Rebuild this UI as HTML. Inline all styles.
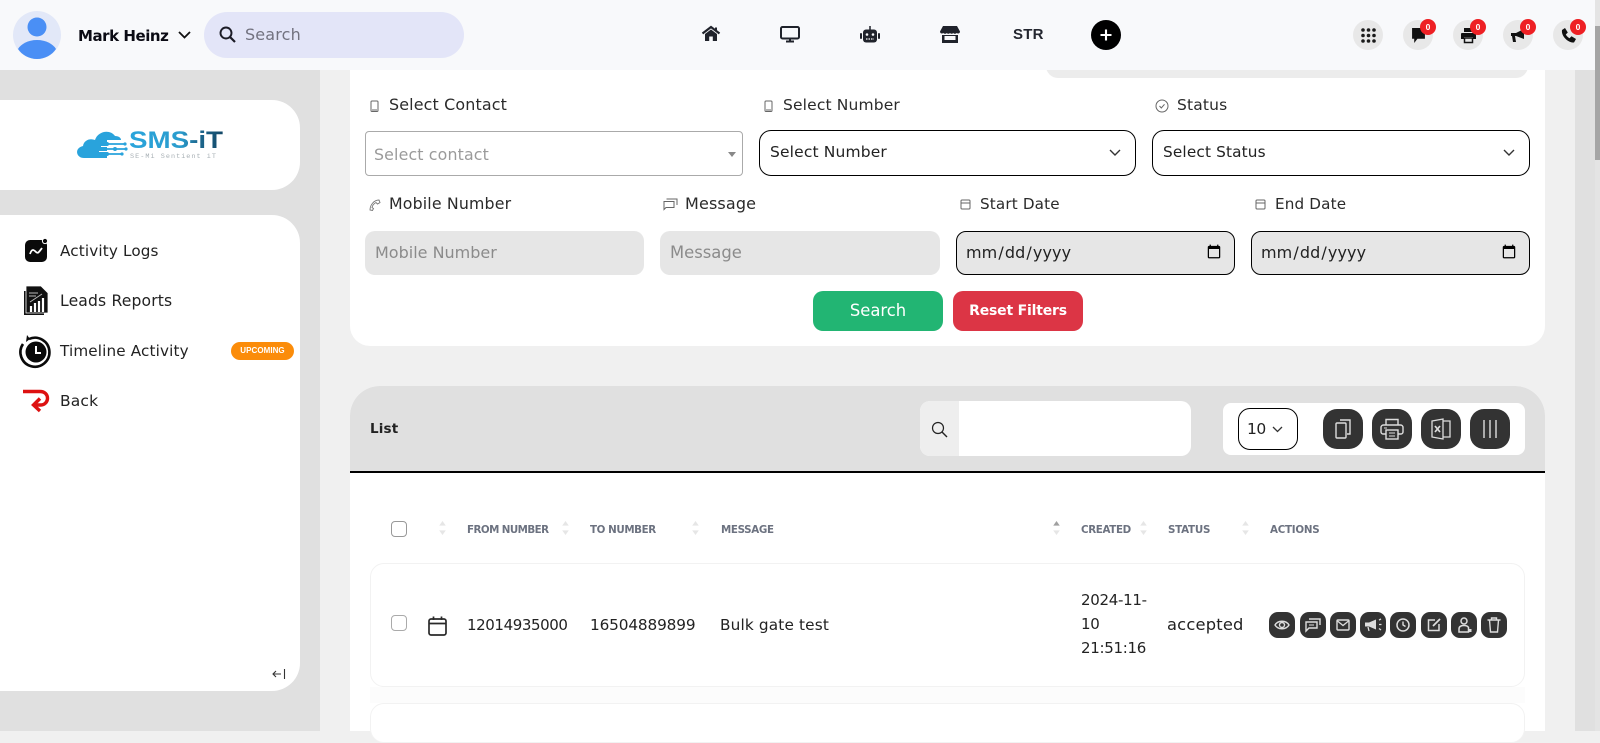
<!DOCTYPE html>
<html lang="en"><head><meta charset="utf-8"><title>SMS-iT</title>
<style>
*{box-sizing:border-box}
html,body{margin:0;padding:0;width:1600px;height:731px;overflow:hidden;background:#f0f0f0;font-family:"DejaVu Sans","Liberation Sans",sans-serif;color:#222}
.a{position:absolute}
.t{position:absolute;white-space:nowrap;line-height:20px;height:20px;font-size:15.4px;letter-spacing:.15px}
svg{position:absolute;display:block;overflow:visible}
.lab{color:#2a2a2a;font-size:15.5px}
.sel{position:absolute;background:#fff;border:1px solid #000;border-radius:12px;height:46px;top:130px;width:378px}
.inp{position:absolute;top:231px;height:44px;width:279px;border:0;border-radius:10px;background:#e6e6e6;padding:0 10px 2px;font:16px "DejaVu Sans",sans-serif;color:#222;outline:0}
.inp::placeholder{color:#8b8b8b;opacity:1}
.date{border:1px solid #000;letter-spacing:.1px;padding:0 10px 2px 8px}
.nb{position:absolute;top:20px;width:30px;height:30px;border-radius:50%;background:#e8e8e8}
.bd{position:absolute;width:16px;height:16px;border-radius:50%;background:#ee2024;top:19px;color:#fff;font:bold 8.5px/16px "Liberation Sans",sans-serif;text-align:center}
.tb{position:absolute;top:409px;width:40px;height:40px;border-radius:14px;background:#333}
.ab{position:absolute;top:612px;width:26px;height:26px;border-radius:9px;background:#333}
.th{position:absolute;top:520px;height:20px;line-height:20px;font-size:10.3px;font-weight:bold;color:#6c7280;white-space:nowrap;letter-spacing:-.25px}
</style></head><body>

<!-- sidebar + page bg -->
<div class="a" style="left:0;top:70px;width:320px;height:661px;background:#e0e0e0"></div>
<div class="a" style="left:1575px;top:70px;width:20px;height:661px;background:#e0e0e0"></div>
<div class="a" style="left:0;top:100px;width:300px;height:90px;background:#fff;border-radius:0 28px 28px 0"></div>
<div class="a" style="left:0;top:215px;width:300px;height:476px;background:#fff;border-radius:0 28px 28px 0"></div>

<!-- logo -->
<svg style="left:77px;top:128px" width="147" height="34" viewBox="0 0 147 34">
<defs><linearGradient id="g" x1="0" x2="1"><stop offset="0" stop-color="#2aa5dc"/><stop offset=".55" stop-color="#2a9ccd"/><stop offset=".72" stop-color="#1d6a92"/><stop offset="1" stop-color="#134766"/></linearGradient></defs>
<path d="M7 30C-1 30-3 20 6 18 7 12 13 10 18 12 21 3 33 1 38 8 42 8 44 10 44 12H30V30Z" fill="#29a3dc"/>
<path d="M24 16H48M26 21H50M22 26H46" stroke="#29a3dc" stroke-width="1.800" fill="none"/>
<path d="M24 18.500H40M22 23.500H37" stroke="#fff" stroke-width="1" fill="none"/>
<circle cx="30" cy="16" r="2" fill="#29a3dc"/><circle cx="38" cy="21" r="2" fill="#29a3dc"/><circle cx="30" cy="26" r="2" fill="#29a3dc"/><circle cx="48" cy="16" r="1.600" fill="#29a3dc"/><circle cx="49" cy="21" r="1.600" fill="#29a3dc"/><circle cx="45" cy="26" r="1.600" fill="#29a3dc"/>
<text x="52" y="20" font-family="Liberation Sans,sans-serif" font-weight="bold" font-size="24" fill="url(#g)" textLength="94" lengthAdjust="spacingAndGlyphs">SMS-iT</text>
<text x="53" y="30" font-family="Liberation Mono,monospace" font-size="6.800" fill="#a8b0b5" textLength="86" lengthAdjust="spacing">SE-Mi Sentient iT</text>
</svg>

<!-- sidebar menu -->
<svg style="left:24px;top:238px" width="25" height="25" viewBox="0 0 25 25"><rect x="1" y="2" width="22" height="22" rx="5" fill="#0a0a0a"/><circle cx="21" cy="3" r="2.600" fill="#0a0a0a" stroke="#fff" stroke-width="1"/><path d="M6 16C8 10 10 12 12 14S15 14 18 10" stroke="#fff" stroke-width="1.800" fill="none"/></svg>
<div class="t" style="left:60px;top:241px;font-size:15.2px">Activity Logs</div>
<svg style="left:23px;top:286px" width="27" height="30" viewBox="0 0 27 30"><rect x="1" y="5" width="20" height="24" fill="#111"/><path d="M3 0H18L25 7V27H3Z" fill="#111" stroke="#fff" stroke-width=".8"/><path d="M6 7H15M6 10H13M7 16L19 8" stroke="#bbb" stroke-width="1"/><path d="M8 26V20M12 26V17M16 26V15M20 26V12" stroke="#fff" stroke-width="2.200"/></svg>
<div class="t" style="left:60px;top:291px;font-size:15.600px">Leads Reports</div>
<svg style="left:20px;top:335px" width="32" height="32" viewBox="0 0 32 32"><circle cx="16" cy="17" r="10.500" fill="#0a0a0a"/><path d="M3 9A14.500 14.500 0 1 0 9 4" stroke="#0a0a0a" stroke-width="2.600" fill="none"/><path d="M7 0L10 4 6 7Z" fill="#0a0a0a"/><path d="M16 11V18H21" stroke="#fff" stroke-width="2" fill="none"/></svg>
<div class="t" style="left:60px;top:341px;font-size:15.200px">Timeline Activity</div>
<div class="a" style="left:231px;top:342px;width:63px;height:18px;border-radius:9px;background:#fb8c0a;color:#fff;font:bold 8px/18px 'Liberation Sans',sans-serif;text-align:center;letter-spacing:.05px">UPCOMING</div>
<svg style="left:22px;top:389px" width="29" height="24" viewBox="0 0 29 24"><path d="M1 2.500H18C28 2.500 28 16 18 16H13" stroke="#dd1111" stroke-width="3.400" fill="none"/><path d="M18 9.500L11.500 16 18 22" stroke="#dd1111" stroke-width="3.400" fill="none"/></svg>
<div class="t" style="left:60px;top:391px;font-size:15.500px">Back</div>
<svg style="left:272px;top:668px" width="14" height="12" viewBox="0 0 14 12"><path d="M9 6H1M4 3L1 6 4 9M12.500 1V11" stroke="#333" stroke-width="1.100" fill="none"/></svg>

<!-- rounded element behind header -->
<div class="a" style="left:350px;top:70px;width:1195px;height:276px;background:#fff;border-radius:0 0 20px 20px"></div>
<div class="a" style="left:1046px;top:66px;width:482px;height:12px;background:#ececec;border-radius:0 0 14px 14px"></div>

<!-- header -->
<div class="a" style="left:0;top:0;width:1595px;height:70px;background:#f8f9fb"></div>
<svg style="left:13px;top:11px" width="48" height="48" viewBox="0 0 48 48"><circle cx="24" cy="24" r="24" fill="#e2e8f8"/><circle cx="24" cy="16" r="9.500" fill="#4a8ff5"/><path d="M5 38C8 33 15 29 24 29S40 33 43 38C39 44 32 48 24 48S9 44 5 38Z" fill="#4a8ff5"/></svg>
<div class="t" style="left:78px;top:26px;font-weight:bold;font-size:15px;color:#0b0b14;letter-spacing:-.45px">Mark Heinz</div>
<svg style="left:178px;top:31px" width="13" height="8" viewBox="0 0 13 8"><path d="M1 1L6.500 6.500 12 1" stroke="#111" stroke-width="1.800" fill="none"/></svg>
<div class="a" style="left:204px;top:12px;width:260px;height:46px;border-radius:23px;background:#e3e5f8"></div>
<svg style="left:219px;top:26px" width="17" height="17" viewBox="0 0 17 17"><circle cx="7" cy="7" r="5.500" stroke="#1b1b26" stroke-width="1.900" fill="none"/><path d="M11 11L16 16" stroke="#1b1b26" stroke-width="2.200"/></svg>
<div class="t" style="left:245px;top:25px;font-size:16px;color:#72727f">Search</div>

<svg style="left:702px;top:26px" width="18" height="15" viewBox="0 0 18 15"><path d="M0.500 7.500L9 1 17.500 7.500" stroke="#20232b" stroke-width="2.200" fill="none"/><path d="M3 8L9 3.500 15 8V15H10.800V10.500H7.200V15H3Z" fill="#20232b"/><path d="M13 1.500H15V5H13Z" fill="#20232b"/></svg>
<svg style="left:780px;top:26px" width="20" height="17" viewBox="0 0 20 17"><rect x="1" y="1" width="18" height="11.500" rx="1.500" stroke="#20232b" stroke-width="2" fill="none"/><path d="M6 15.500H14M10 13V15" stroke="#20232b" stroke-width="2"/></svg>
<svg style="left:860px;top:26px" width="20" height="17" viewBox="0 0 20 17"><rect x="3" y="3.500" width="14" height="13" rx="3" fill="#20232b"/><path d="M10 0V4" stroke="#20232b" stroke-width="1.500"/><rect x="0" y="7" width="2" height="6" rx="1" fill="#20232b"/><rect x="18" y="7" width="2" height="6" rx="1" fill="#20232b"/><circle cx="7" cy="8.500" r="1.300" fill="#f8f9fb"/><circle cx="13" cy="8.500" r="1.300" fill="#f8f9fb"/><path d="M6 13H14" stroke="#f8f9fb" stroke-width="1.200" stroke-dasharray="1.500 1"/></svg>
<svg style="left:940px;top:26px" width="20" height="17" viewBox="0 0 20 17"><path d="M3 0H17L20 5.500C20 7.500 18 8 16.700 7 15.500 8 14 8 13.300 7 12 8 11 8 10 7 9 8 8 8 6.700 7 6 8 4.500 8 3.300 7 2 8 0 7.500 0 5.500Z" fill="#20232b"/><path d="M2 9H18V17H2Z" fill="#20232b"/><rect x="4.500" y="10" width="11" height="4" fill="#f8f9fb"/></svg>
<div class="t" style="left:1013px;top:25px;font:bold 15px/20px 'Liberation Sans',sans-serif;color:#23262f;letter-spacing:.2px">STR</div>
<div class="a" style="left:1091px;top:20px;width:30px;height:30px;border-radius:50%;background:#000"></div>
<svg style="left:1100px;top:29px" width="12" height="12" viewBox="0 0 12 12"><path d="M6 0.500V11.500M0.500 6H11.500" stroke="#fff" stroke-width="2.100"/></svg>

<div class="nb" style="left:1353px"></div>
<svg style="left:1361px;top:28px" width="15" height="15" viewBox="0 0 15 15" fill="#1a1a1a"><circle cx="2" cy="2" r="1.800"/><circle cx="7.500" cy="2" r="1.800"/><circle cx="13" cy="2" r="1.800"/><circle cx="2" cy="7.500" r="1.800"/><circle cx="7.500" cy="7.500" r="1.800"/><circle cx="13" cy="7.500" r="1.800"/><circle cx="2" cy="13" r="1.800"/><circle cx="7.500" cy="13" r="1.800"/><circle cx="13" cy="13" r="1.800"/></svg>
<div class="nb" style="left:1403px"></div>
<svg style="left:1411px;top:28px" width="15" height="15" viewBox="0 0 14 14"><path d="M1 0H13V10H6L3 14V10H1Z" fill="#111"/></svg>
<div class="bd" style="left:1420px">0</div>
<div class="nb" style="left:1453px"></div>
<svg style="left:1461px;top:28px" width="15" height="15" viewBox="0 0 15 15"><path d="M3 0H12V4H3Z" fill="#111"/><path d="M1 5H14C14.600 5 15 5.400 15 6V11H12V9H3V11H0V6C0 5.400 .4 5 1 5Z" fill="#111"/><rect x="3.500" y="10" width="8" height="4.500" fill="none" stroke="#111" stroke-width="1.500"/></svg>
<div class="bd" style="left:1470px">0</div>
<div class="nb" style="left:1503px"></div>
<svg style="left:1511px;top:29px" width="15" height="14" viewBox="0 0 15 14"><path d="M0 4H5L13 0V10L5 7H4L5 13H2L1 7H0Z" fill="#111"/></svg>
<div class="bd" style="left:1520px">0</div>
<div class="nb" style="left:1553px"></div>
<svg style="left:1561px;top:28px" width="15" height="15" viewBox="0 0 15 15"><path d="M1 2L4 0 6.800 4.500 4.800 6.500C5.600 8 7 9.400 8.500 10.200L10.500 8.200 15 11 13 14.500C7 15 0 8 1 2Z" fill="#111"/></svg>
<div class="bd" style="left:1570px">0</div>

<!-- scrollbar -->
<div class="a" style="left:1595px;top:0;width:5px;height:731px;background:#e4e4e4"></div>
<div class="a" style="left:1595px;top:26px;width:5px;height:134px;background:#a5a5a5"></div>

<!-- form row 1 -->
<svg style="left:370px;top:100px" width="9" height="12" viewBox="0 0 9 12"><rect x="1" y="1" width="7" height="10.500" rx="1" stroke="#666" stroke-width="1" fill="none"/><path d="M2 10H7" stroke="#666"/></svg>
<div class="t lab" style="left:389px;top:95px;font-size:15.900px">Select Contact</div>
<svg style="left:764px;top:100px" width="9" height="12" viewBox="0 0 9 12"><rect x="1" y="1" width="7" height="10.500" rx="1" stroke="#666" stroke-width="1" fill="none"/><path d="M2 10H7" stroke="#666"/></svg>
<div class="t lab" style="left:783px;top:95px">Select Number</div>
<svg style="left:1155px;top:99px" width="14" height="14" viewBox="0 0 14 14"><circle cx="7" cy="7" r="6" stroke="#666" fill="none"/><path d="M4.500 7L6.300 9 9.500 5.300" stroke="#666" fill="none"/></svg>
<div class="t lab" style="left:1177px;top:95px">Status</div>

<div class="a" style="left:365px;top:131px;width:378px;height:45px;border:1px solid #aaa;border-radius:4px;background:#fff"></div>
<div class="t" style="left:374px;top:145px;color:#9a9a9a;font-size:15.800px">Select contact</div>
<svg style="left:728px;top:152px" width="8" height="5" viewBox="0 0 8 5"><path d="M0 0H8L4 5Z" fill="#888"/></svg>

<div class="sel" style="left:759px;width:377px"></div>
<div class="t" style="left:770px;top:142px;font-size:15.500px">Select Number</div>
<svg style="left:1109px;top:149px" width="12" height="7" viewBox="0 0 12 7"><path d="M1 1L6 6 11 1" stroke="#333" stroke-width="1.400" fill="none"/></svg>
<div class="sel" style="left:1152px"></div>
<div class="t" style="left:1163px;top:142px;font-size:15.300px">Select Status</div>
<svg style="left:1503px;top:149px" width="12" height="7" viewBox="0 0 12 7"><path d="M1 1L6 6 11 1" stroke="#333" stroke-width="1.400" fill="none"/></svg>

<!-- form row 2 -->
<svg style="left:369px;top:199px" width="12" height="12" viewBox="0 0 12 12"><path d="M1 11C1 6 5 1 10 1L11 3.500 8.500 5 7 3.500C5 4.500 3.500 6.500 3 8.500L4.500 9.500 3.500 11.500Z" stroke="#777" stroke-width=".9" fill="none"/></svg>
<div class="t lab" style="left:389px;top:194px;font-size:15.800px">Mobile Number</div>
<svg style="left:663px;top:198px" width="15" height="13" viewBox="0 0 15 13"><path d="M1 3.500H11V9.500H3L1 11.500Z" stroke="#666" fill="none"/><path d="M3.500 1H14V7" stroke="#666" fill="none"/></svg>
<div class="t lab" style="left:685px;top:194px;font-size:16px">Message</div>
<svg style="left:960px;top:198px" width="11" height="12" viewBox="0 0 11 12"><rect x="1" y="2" width="9" height="9" rx="1" stroke="#666" fill="none"/><path d="M1 5H10" stroke="#666"/></svg>
<div class="t lab" style="left:980px;top:194px;font-size:15.200px">Start Date</div>
<svg style="left:1255px;top:198px" width="11" height="12" viewBox="0 0 11 12"><rect x="1" y="2" width="9" height="9" rx="1" stroke="#666" fill="none"/><path d="M1 5H10" stroke="#666"/></svg>
<div class="t lab" style="left:1275px;top:194px;font-size:15.200px">End Date</div>

<input class="inp" style="left:365px" placeholder="Mobile Number">
<input class="inp" style="left:660px;width:280px;font-size:16.400px" placeholder="Message">
<input class="inp date" type="date" style="left:956px">
<input class="inp date" type="date" style="left:1251px">

<div class="a" style="left:813px;top:291px;width:130px;height:40px;border-radius:10px;background:#22b573;color:#fff;text-align:center;font-size:16.400px;line-height:40px">Search</div>
<div class="a" style="left:953px;top:291px;width:130px;height:40px;border-radius:10px;background:#dc3545;color:#fff;text-align:center;font-weight:bold;font-size:14px;line-height:40px;letter-spacing:-.2px">Reset Filters</div>

<!-- list card -->
<div class="a" style="left:350px;top:386px;width:1195px;height:345px;background:#fff;border-radius:30px 30px 0 0"></div>
<div class="a" style="left:350px;top:386px;width:1195px;height:87px;background:#e0e0e0;border-radius:30px 30px 0 0;border-bottom:2px solid #000"></div>
<div class="t" style="left:370px;top:419px;font-weight:bold;font-size:13.500px;color:#222">List</div>
<div class="a" style="left:920px;top:401px;width:271px;height:55px;background:#fff;border-radius:10px;overflow:hidden"><div style="width:39px;height:55px;background:#eee"></div></div>
<svg style="left:931px;top:421px" width="17" height="17" viewBox="0 0 17 17"><circle cx="7" cy="7" r="5.500" stroke="#222" stroke-width="1.200" fill="none"/><path d="M11 11L16 16" stroke="#222" stroke-width="1.400"/></svg>
<div class="a" style="left:1223px;top:403px;width:302px;height:52px;background:#fff;border-radius:8px"></div>
<div class="a" style="left:1238px;top:408px;width:60px;height:42px;border:1px solid #000;border-radius:12px;background:#fff"></div>
<div class="t" style="left:1247px;top:419px;color:#222;font-size:15.500px;letter-spacing:-.5px">10</div>
<svg style="left:1272px;top:426px" width="11" height="7" viewBox="0 0 11 7"><path d="M1 1L5.500 5.500 10 1" stroke="#333" stroke-width="1.300" fill="none"/></svg>

<div class="tb" style="left:1323px"></div>
<svg style="left:1335px;top:419px" width="16" height="20" viewBox="0 0 16 20"><rect x="1" y="4" width="10" height="15" rx="1" stroke="#ddd" stroke-width="1.400" fill="none"/><path d="M5 1H15V15H12" stroke="#ddd" stroke-width="1.400" fill="none"/></svg>
<div class="tb" style="left:1372px"></div>
<svg style="left:1380px;top:418px" width="24" height="22" viewBox="0 0 24 22"><path d="M6 7V1.500H18V7" stroke="#ddd" stroke-width="1.400" fill="none"/><path d="M6 16H3C2 16 1 15 1 14V9.500C1 8 2 7 3.500 7H20.500C22 7 23 8 23 9.500V14C23 15 22 16 21 16H18" stroke="#ddd" stroke-width="1.400" fill="none"/><rect x="6" y="12" width="12" height="9" stroke="#ddd" stroke-width="1.400" fill="none"/><path d="M9 15H15M9 18H15" stroke="#ddd"/><path d="M4 10H7" stroke="#ddd"/></svg>
<div class="tb" style="left:1421px"></div>
<svg style="left:1431px;top:418px" width="20" height="22" viewBox="0 0 20 22"><path d="M1 3L12 1V21L1 19Z" stroke="#ddd" stroke-width="1.300" fill="none"/><path d="M12 3H19V19H12" stroke="#ddd" stroke-width="1.300" fill="none"/><path d="M4 8L9 14M9 8L4 14" stroke="#ddd" stroke-width="1.700"/></svg>
<div class="tb" style="left:1470px"></div>
<svg style="left:1482px;top:420px" width="16" height="18" viewBox="0 0 16 18"><path d="M2 0V18M8 0V18M14 0V18" stroke="#ddd" stroke-width="1.400"/></svg>

<!-- table head -->
<div class="a" style="left:391px;top:521px;width:16px;height:16px;border:1px solid #999;border-radius:4px;background:#fff"></div>
<svg style="left:439px;top:521px" width="7" height="14" viewBox="0 0 7 15"><path d="M3.500 0L7 5H0Z" fill="#e6e6e6"/><path d="M3.500 15L7 10H0Z" fill="#e6e6e6"/></svg>
<div class="th" style="left:467px;letter-spacing:-.55px">FROM NUMBER</div>
<svg style="left:562px;top:521px" width="7" height="14" viewBox="0 0 7 15"><path d="M3.500 0L7 5H0Z" fill="#e6e6e6"/><path d="M3.500 15L7 10H0Z" fill="#e6e6e6"/></svg>
<div class="th" style="left:590px;letter-spacing:-.4px">TO NUMBER</div>
<svg style="left:692px;top:521px" width="7" height="14" viewBox="0 0 7 15"><path d="M3.500 0L7 5H0Z" fill="#e6e6e6"/><path d="M3.500 15L7 10H0Z" fill="#e6e6e6"/></svg>
<div class="th" style="left:721px;letter-spacing:-.35px">MESSAGE</div>
<svg style="left:1053px;top:521px" width="7" height="14" viewBox="0 0 7 15"><path d="M3.500 0L7 5H0Z" fill="#a0a0a0"/><path d="M3.500 15L7 10H0Z" fill="#e6e6e6"/></svg>
<div class="th" style="left:1081px;letter-spacing:-.35px">CREATED</div>
<svg style="left:1140px;top:521px" width="7" height="14" viewBox="0 0 7 15"><path d="M3.500 0L7 5H0Z" fill="#e6e6e6"/><path d="M3.500 15L7 10H0Z" fill="#e6e6e6"/></svg>
<div class="th" style="left:1168px">STATUS</div>
<svg style="left:1242px;top:521px" width="7" height="14" viewBox="0 0 7 15"><path d="M3.500 0L7 5H0Z" fill="#e6e6e6"/><path d="M3.500 15L7 10H0Z" fill="#e6e6e6"/></svg>
<div class="th" style="left:1270px">ACTIONS</div>

<!-- row -->
<div class="a" style="left:370px;top:563px;width:1155px;height:124px;border:1px solid #f2f2f2;border-radius:14px;background:#fff"></div>
<div class="a" style="left:370px;top:687px;width:1155px;height:16px;background:#fcfcfc"></div>
<div class="a" style="left:370px;top:703px;width:1155px;height:40px;border:1px solid #f2f2f2;border-radius:14px;background:#fff"></div>
<div class="a" style="left:391px;top:615px;width:16px;height:16px;border:1px solid #aaa;border-radius:4px;background:#fff"></div>
<svg style="left:428px;top:616px" width="19" height="20" viewBox="0 0 19 20"><rect x="1" y="3" width="17" height="16" rx="2" stroke="#2a2a2a" stroke-width="1.700" fill="none"/><path d="M1 7.500H18M5.500 0.500V4M13.500 0.500V4" stroke="#2a2a2a" stroke-width="1.700"/></svg>
<div class="t" style="left:467px;top:615px;font-size:15px;letter-spacing:-.4px">12014935000</div>
<div class="t" style="left:590px;top:615px;font-size:15.300px;letter-spacing:-.15px">16504889899</div>
<div class="t" style="left:720px;top:615px;font-size:15.300px">Bulk gate test</div>
<div class="t" style="left:1081px;top:590px;font-size:15px;letter-spacing:-.3px">2024-11-</div>
<div class="t" style="left:1081px;top:614px;font-size:15px;letter-spacing:-.3px">10</div>
<div class="t" style="left:1081px;top:638px;font-size:15px;letter-spacing:-.3px">21:51:16</div>
<div class="t" style="left:1167px;top:615px;font-size:16.300px;letter-spacing:.2px">accepted</div>

<div class="ab" style="left:1269px"></div>
<svg style="left:1274px;top:619px" width="16" height="12" viewBox="0 0 16 12"><path d="M1 6C4 1 12 1 15 6 12 11 4 11 1 6Z" stroke="#ddd" stroke-width="1.400" fill="none"/><circle cx="8" cy="6" r="2.500" stroke="#ddd" stroke-width="1.400" fill="none"/></svg>
<div class="ab" style="left:1300px"></div>
<svg style="left:1305px;top:618px" width="16" height="14" viewBox="0 0 16 14"><path d="M1 4H12V10H4L1 13Z" stroke="#ddd" stroke-width="1.400" fill="none"/><path d="M4 1H15V7" stroke="#ddd" stroke-width="1.400" fill="none"/><path d="M4 7H9" stroke="#ddd"/></svg>
<div class="ab" style="left:1330px"></div>
<svg style="left:1336px;top:619px" width="14" height="12" viewBox="0 0 14 12"><rect x="1" y="1" width="12" height="10" rx="1" stroke="#ddd" stroke-width="1.400" fill="none"/><path d="M1.500 2L7 6.500 12.500 2" stroke="#ddd" stroke-width="1.300" fill="none"/></svg>
<div class="ab" style="left:1360px"></div>
<svg style="left:1364px;top:618px" width="18" height="14" viewBox="0 0 18 14"><path d="M1 4.500H5L12 1.500V11.500L5 8.500H1Z" fill="#ddd"/><path d="M4 9L5 13M15 2L17 1M15 6.500H17.500M15 10.500L17 12" stroke="#ddd" stroke-width="1.300"/></svg>
<div class="ab" style="left:1390px"></div>
<svg style="left:1396px;top:618px" width="14" height="14" viewBox="0 0 14 14"><circle cx="7" cy="7" r="6" stroke="#ddd" stroke-width="1.500" fill="none"/><path d="M7 3.500V7L9.500 8.500" stroke="#ddd" stroke-width="1.400" fill="none"/></svg>
<div class="ab" style="left:1421px"></div>
<svg style="left:1427px;top:618px" width="14" height="14" viewBox="0 0 14 14"><path d="M8 2H1.500V12.500H12V6" stroke="#ddd" stroke-width="1.500" fill="none"/><path d="M6 8L13 1" stroke="#ddd" stroke-width="1.800"/></svg>
<div class="ab" style="left:1451px"></div>
<svg style="left:1458px;top:617px" width="14" height="16" viewBox="0 0 14 16"><circle cx="6" cy="4" r="3" stroke="#ddd" stroke-width="1.500" fill="none"/><path d="M1 15V12C1 9.500 3 8.500 6 8.500S10 9.500 10.500 10.500V15Z" stroke="#ddd" stroke-width="1.500" fill="none"/><rect x="10" y="12" width="3.500" height="3" fill="#ddd"/></svg>
<div class="ab" style="left:1481px"></div>
<svg style="left:1487px;top:617px" width="14" height="16" viewBox="0 0 14 16"><path d="M0.500 3H13.500M4.500 3V1H9.500V3" stroke="#ddd" stroke-width="1.400" fill="none"/><path d="M2.500 3L3.500 15H10.500L11.500 3" stroke="#ddd" stroke-width="1.400" fill="none"/></svg>

</body></html>
